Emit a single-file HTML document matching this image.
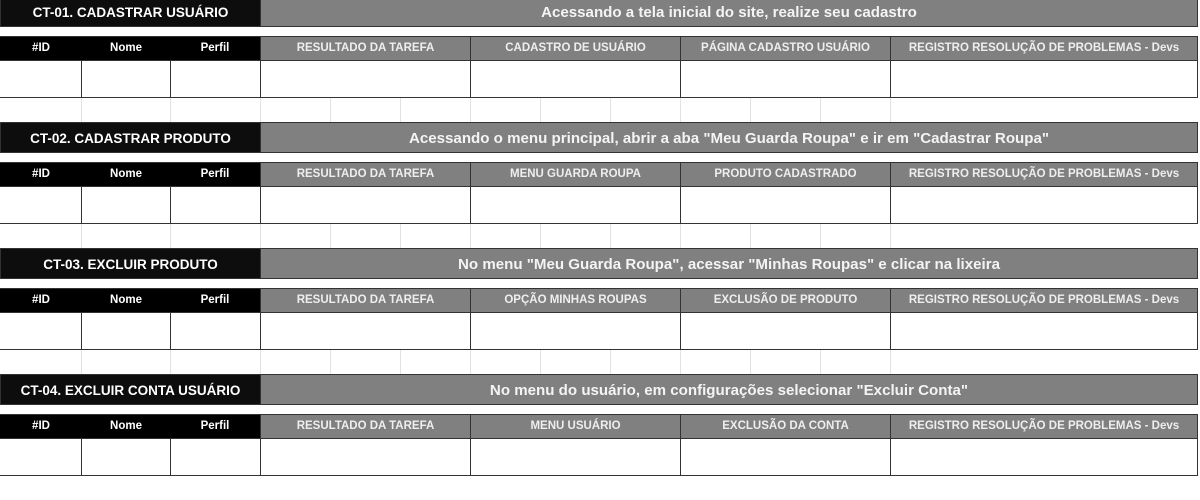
<!DOCTYPE html>
<html><head><meta charset="utf-8"><style>
*{margin:0;padding:0;box-sizing:border-box}
body{width:1200px;height:482px;overflow:hidden;background:#fff;position:relative;font-family:"Liberation Sans",Arial,sans-serif;font-weight:bold}
.b{position:absolute;left:0;width:1200px;height:126px}
.t{position:absolute;top:0;height:31px;border:1px solid #333;display:flex;align-items:center;justify-content:center;color:#fff;padding-top:1px}
.t1{left:0;width:261px;background:#0d0d0d;font-size:13.5px}
.t2{left:260px;width:938px;background:#808080;font-size:15.1px;color:#f4f4f4}
.h{position:absolute;top:40px;height:25px;border:1px solid #333;display:flex;align-items:flex-start;padding-top:5px;justify-content:center;font-size:11.5px;color:#fff}
.hb{background:#000}
.hg{background:#808080;color:#eee}
.d{position:absolute;top:64px;height:38px;border:1px solid #333;background:#fff}
.g{position:absolute;top:102px;height:24px;border-left:1px solid #e2e2e2}
</style></head><body>

<div class="b" style="top:-4px">
<div class="t t1">CT-01. CADASTRAR USUÁRIO</div>
<div class="t t2">Acessando a tela inicial do site, realize seu cadastro</div>
<div class="h hb" style="left:-1px;width:83px;border-right:none">#ID</div>
<div class="h hb" style="left:81px;width:90px;border-left:none;border-right:none">Nome</div>
<div class="h hb" style="left:170px;width:91px;border-left:none">Perfil</div>
<div class="h hg" style="left:260px;width:211px">RESULTADO DA TAREFA</div>
<div class="h hg" style="left:470px;width:211px">CADASTRO DE USUÁRIO</div>
<div class="h hg" style="left:680px;width:211px">PÁGINA CADASTRO USUÁRIO</div>
<div class="h hg" style="left:890px;width:308px">REGISTRO RESOLUÇÃO DE PROBLEMAS - Devs</div>
<div class="d" style="left:-1px;width:83px"></div><div class="d" style="left:81px;width:90px"></div><div class="d" style="left:170px;width:91px"></div><div class="d" style="left:260px;width:211px"></div><div class="d" style="left:470px;width:211px"></div><div class="d" style="left:680px;width:211px"></div><div class="d" style="left:890px;width:308px"></div>
<div class="g" style="left:81px"></div><div class="g" style="left:170px"></div><div class="g" style="left:260px"></div><div class="g" style="left:330px"></div><div class="g" style="left:400px"></div><div class="g" style="left:470px"></div><div class="g" style="left:540px"></div><div class="g" style="left:610px"></div><div class="g" style="left:680px"></div><div class="g" style="left:750px"></div><div class="g" style="left:820px"></div><div class="g" style="left:890px"></div>
</div>

<div class="b" style="top:122px">
<div class="t t1">CT-02. CADASTRAR PRODUTO</div>
<div class="t t2">Acessando o menu principal, abrir a aba "Meu Guarda Roupa" e ir em "Cadastrar Roupa"</div>
<div class="h hb" style="left:-1px;width:83px;border-right:none">#ID</div>
<div class="h hb" style="left:81px;width:90px;border-left:none;border-right:none">Nome</div>
<div class="h hb" style="left:170px;width:91px;border-left:none">Perfil</div>
<div class="h hg" style="left:260px;width:211px">RESULTADO DA TAREFA</div>
<div class="h hg" style="left:470px;width:211px">MENU GUARDA ROUPA</div>
<div class="h hg" style="left:680px;width:211px">PRODUTO CADASTRADO</div>
<div class="h hg" style="left:890px;width:308px">REGISTRO RESOLUÇÃO DE PROBLEMAS - Devs</div>
<div class="d" style="left:-1px;width:83px"></div><div class="d" style="left:81px;width:90px"></div><div class="d" style="left:170px;width:91px"></div><div class="d" style="left:260px;width:211px"></div><div class="d" style="left:470px;width:211px"></div><div class="d" style="left:680px;width:211px"></div><div class="d" style="left:890px;width:308px"></div>
<div class="g" style="left:81px"></div><div class="g" style="left:170px"></div><div class="g" style="left:260px"></div><div class="g" style="left:330px"></div><div class="g" style="left:400px"></div><div class="g" style="left:470px"></div><div class="g" style="left:540px"></div><div class="g" style="left:610px"></div><div class="g" style="left:680px"></div><div class="g" style="left:750px"></div><div class="g" style="left:820px"></div><div class="g" style="left:890px"></div>
</div>

<div class="b" style="top:248px">
<div class="t t1">CT-03. EXCLUIR PRODUTO</div>
<div class="t t2">No menu "Meu Guarda Roupa", acessar "Minhas Roupas" e clicar na lixeira</div>
<div class="h hb" style="left:-1px;width:83px;border-right:none">#ID</div>
<div class="h hb" style="left:81px;width:90px;border-left:none;border-right:none">Nome</div>
<div class="h hb" style="left:170px;width:91px;border-left:none">Perfil</div>
<div class="h hg" style="left:260px;width:211px">RESULTADO DA TAREFA</div>
<div class="h hg" style="left:470px;width:211px">OPÇÃO MINHAS ROUPAS</div>
<div class="h hg" style="left:680px;width:211px">EXCLUSÃO DE PRODUTO</div>
<div class="h hg" style="left:890px;width:308px">REGISTRO RESOLUÇÃO DE PROBLEMAS - Devs</div>
<div class="d" style="left:-1px;width:83px"></div><div class="d" style="left:81px;width:90px"></div><div class="d" style="left:170px;width:91px"></div><div class="d" style="left:260px;width:211px"></div><div class="d" style="left:470px;width:211px"></div><div class="d" style="left:680px;width:211px"></div><div class="d" style="left:890px;width:308px"></div>
<div class="g" style="left:81px"></div><div class="g" style="left:170px"></div><div class="g" style="left:260px"></div><div class="g" style="left:330px"></div><div class="g" style="left:400px"></div><div class="g" style="left:470px"></div><div class="g" style="left:540px"></div><div class="g" style="left:610px"></div><div class="g" style="left:680px"></div><div class="g" style="left:750px"></div><div class="g" style="left:820px"></div><div class="g" style="left:890px"></div>
</div>

<div class="b" style="top:374px">
<div class="t t1">CT-04. EXCLUIR CONTA USUÁRIO</div>
<div class="t t2">No menu do usuário, em configurações selecionar "Excluir Conta"</div>
<div class="h hb" style="left:-1px;width:83px;border-right:none">#ID</div>
<div class="h hb" style="left:81px;width:90px;border-left:none;border-right:none">Nome</div>
<div class="h hb" style="left:170px;width:91px;border-left:none">Perfil</div>
<div class="h hg" style="left:260px;width:211px">RESULTADO DA TAREFA</div>
<div class="h hg" style="left:470px;width:211px">MENU USUÁRIO</div>
<div class="h hg" style="left:680px;width:211px">EXCLUSÃO DA CONTA</div>
<div class="h hg" style="left:890px;width:308px">REGISTRO RESOLUÇÃO DE PROBLEMAS - Devs</div>
<div class="d" style="left:-1px;width:83px"></div><div class="d" style="left:81px;width:90px"></div><div class="d" style="left:170px;width:91px"></div><div class="d" style="left:260px;width:211px"></div><div class="d" style="left:470px;width:211px"></div><div class="d" style="left:680px;width:211px"></div><div class="d" style="left:890px;width:308px"></div>
</div>
</body></html>
